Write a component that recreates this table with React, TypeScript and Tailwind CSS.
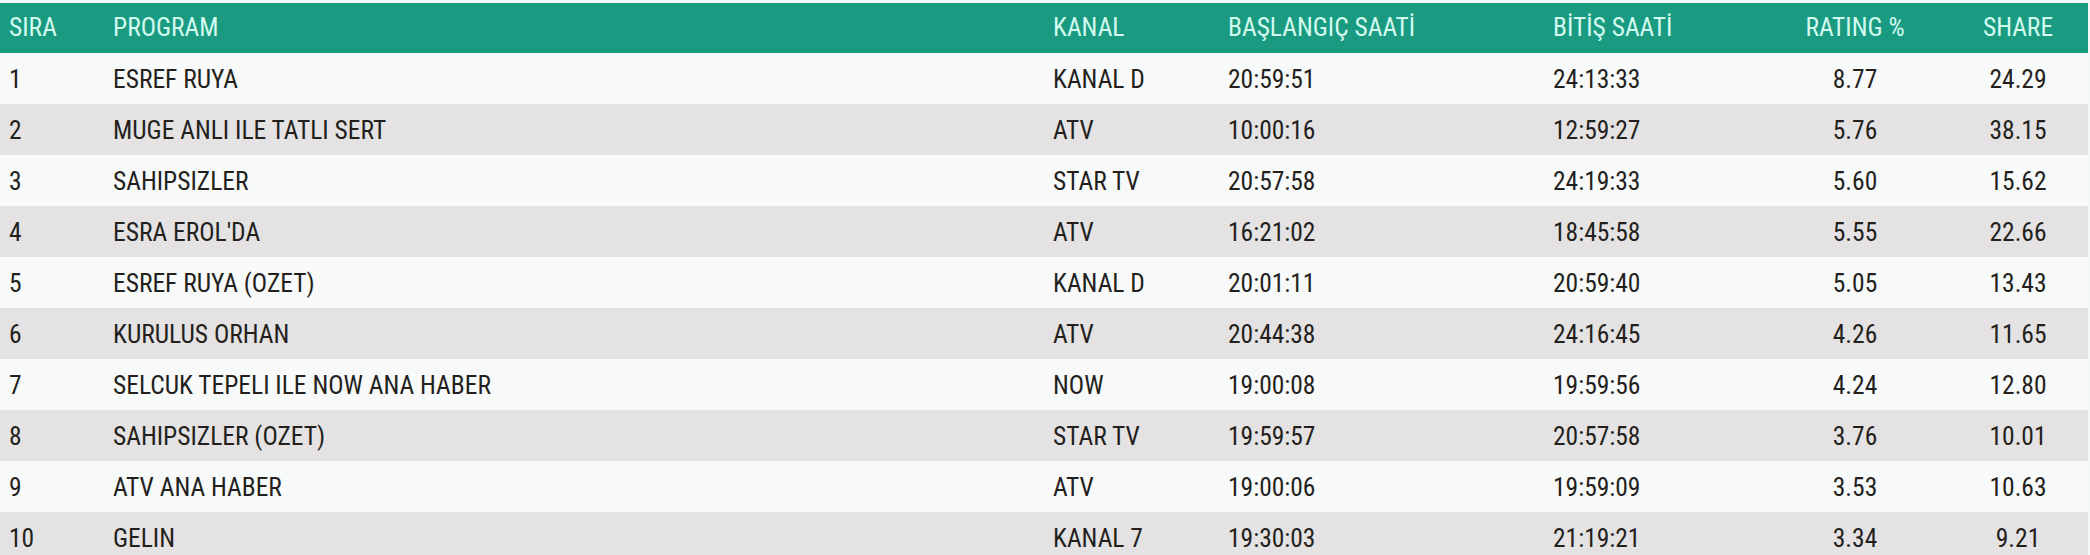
const rows = [
  ["1", "ESREF RUYA", "KANAL D", "20:59:51", "24:13:33", "8.77", "24.29"],
  ["2", "MUGE ANLI ILE TATLI SERT", "ATV", "10:00:16", "12:59:27", "5.76", "38.15"],
  ["3", "SAHIPSIZLER", "STAR TV", "20:57:58", "24:19:33", "5.60", "15.62"],
  ["4", "ESRA EROL'DA", "ATV", "16:21:02", "18:45:58", "5.55", "22.66"],
  ["5", "ESREF RUYA (OZET)", "KANAL D", "20:01:11", "20:59:40", "5.05", "13.43"],
  ["6", "KURULUS ORHAN", "ATV", "20:44:38", "24:16:45", "4.26", "11.65"],
  ["7", "SELCUK TEPELI ILE NOW ANA HABER", "NOW", "19:00:08", "19:59:56", "4.24", "12.80"],
  ["8", "SAHIPSIZLER (OZET)", "STAR TV", "19:59:57", "20:57:58", "3.76", "10.01"],
  ["9", "ATV ANA HABER", "ATV", "19:00:06", "19:59:09", "3.53", "10.63"],
  ["10", "GELIN", "KANAL 7", "19:30:03", "21:19:21", "3.34", "9.21"],
];

const grid =
  "grid grid-cols-[104px_940px_175px_325px_207px_190px_136px] items-center pl-[9px]";

const App = () => {
  return (
    <div
      className="w-[2090px] h-[555px] overflow-hidden bg-[#f4f8f7] pt-[3px] text-[25.5px] leading-none"
      style={{ fontFamily: '"Roboto Condensed", "Liberation Sans Narrow", "DejaVu Sans Condensed", sans-serif' }}
    >
      <div className="w-[2088px]">
        {/* header */}
        <div className={`${grid} h-[50px] bg-[#1b9a82] text-[#d2fbee]`}>
          <div>SIRA</div>
          <div>PROGRAM</div>
          <div>KANAL</div>
          <div>BAŞLANGIÇ SAATİ</div>
          <div>BİTİŞ SAATİ</div>
          <div className="text-center">RATING %</div>
          <div className="text-center">SHARE</div>
        </div>

        {/* rows */}
        {rows.map((r, i) => (
          <div
            key={r[0]}
            className={`${grid} h-[51px] pt-[2px] text-[#231f1c] ${i % 2 === 0 ? "bg-[#f8f9f9]" : "bg-[#e4e2e2]"}`}
          >
            <div>{r[0]}</div>
            <div>{r[1]}</div>
            <div>{r[2]}</div>
            <div>{r[3]}</div>
            <div>{r[4]}</div>
            <div className="text-center">{r[5]}</div>
            <div className="text-center">{r[6]}</div>
          </div>
        ))}
      </div>
    </div>
  );
};

export default App;
